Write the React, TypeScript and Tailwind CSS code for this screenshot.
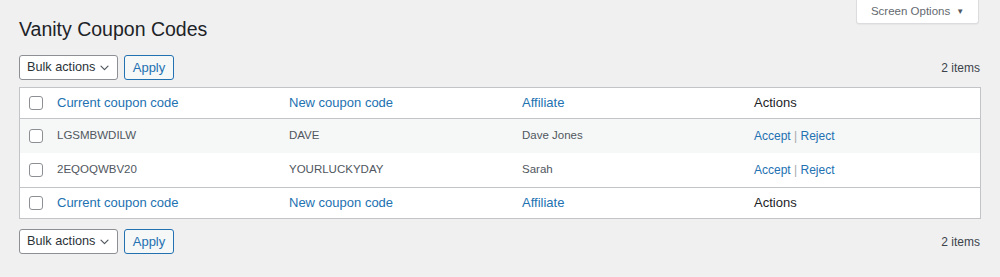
import React from 'react';

const rows = [
  { current: 'LGSMBWDILW', next: 'DAVE', affiliate: 'Dave Jones' },
  { current: '2EQOQWBV20', next: 'YOURLUCKYDAY', affiliate: 'Sarah' },
];

const Checkbox: React.FC = () => (
  <span className="block w-[14px] h-[14px] rounded-[3px] border border-[#8c8f94] bg-white" />
);

const BulkActions: React.FC = () => (
  <div className="flex items-center justify-between">
    <div className="flex items-center gap-[6px]">
      <button className="h-[25px] w-[99px] flex items-center gap-[5px] whitespace-nowrap pl-[7px] bg-white border border-[#8c8f94] rounded-[3px] text-[12.7px] text-[#2c3338]">
        Bulk actions
        <svg width="9" height="6" viewBox="0 0 9 6" fill="none" className="shrink-0">
          <path d="M1 1.2l3.5 3.5 3.5-3.5" stroke="#50575e" strokeWidth="1.2" strokeLinecap="round" strokeLinejoin="round" />
        </svg>
      </button>
      <button className="h-[25px] w-[50px] bg-[#f6f7f7] border border-[#2271b1] rounded-[3px] text-[13px] text-[#2271b1]">
        Apply
      </button>
    </div>
    <span className="pr-px text-[12px] text-[#3c434a]">2 items</span>
  </div>
);

const HeaderRow: React.FC<{ top?: boolean }> = ({ top }) => (
  <div
    className={`grid grid-cols-[37px_232px_233px_232px_1fr] items-center h-[31px] ${
      top ? 'border-b border-[#c3c4c7]' : 'border-t border-[#c3c4c7]'
    }`}
  >
    <div className="pl-[9px]">
      <Checkbox />
    </div>
    <span className="text-[13px] text-[#2271b1]">Current coupon code</span>
    <span className="text-[13px] text-[#2271b1]">New coupon code</span>
    <span className="text-[13px] text-[#2271b1]">Affiliate</span>
    <span className="text-[13px] text-[#1d2327]">Actions</span>
  </div>
);

export default function App() {
  return (
    <div
      className="relative min-h-[277px] bg-[#f0f0f1] px-[19px] pb-[20px]"
      style={{ fontFamily: '"Liberation Sans", Arial, sans-serif' }}
    >
      <button className="absolute top-0 right-[21px] w-[123px] h-[24px] bg-white border border-t-0 border-[#dcdcde] rounded-b-[3px] shadow-[0_1px_1px_rgba(0,0,0,0.04)] flex items-center justify-center gap-[6px] text-[11.5px] text-[#646970]">
        Screen Options
        <span className="text-[8px] text-[#50575e]">▼</span>
      </button>

      <h1 className="pt-[17px] h-[42px] text-[19.5px] leading-[25px] text-[#1d2327]">Vanity Coupon Codes</h1>

      <div className="mt-[13px]">
        <BulkActions />
      </div>

      <div className="mt-[7px] bg-white border border-[#c3c4c7]">
        <HeaderRow top />
        {rows.map((r, i) => (
          <div
            key={i}
            className={`grid grid-cols-[37px_232px_233px_232px_1fr] items-center h-[34px] text-[11.5px] text-[#50575e] ${
              i === 0 ? 'bg-[#f6f7f7]' : 'bg-white'
            }`}
          >
            <div className="pl-[9px]">
              <Checkbox />
            </div>
            <span>{r.current}</span>
            <span>{r.next}</span>
            <span>{r.affiliate}</span>
            <span className="text-[12px] text-[#2271b1]">
              Accept <span className="text-[#a7aaad]">|</span> Reject
            </span>
          </div>
        ))}
        <HeaderRow />
      </div>

      <div className="mt-[10px]">
        <BulkActions />
      </div>
    </div>
  );
}
